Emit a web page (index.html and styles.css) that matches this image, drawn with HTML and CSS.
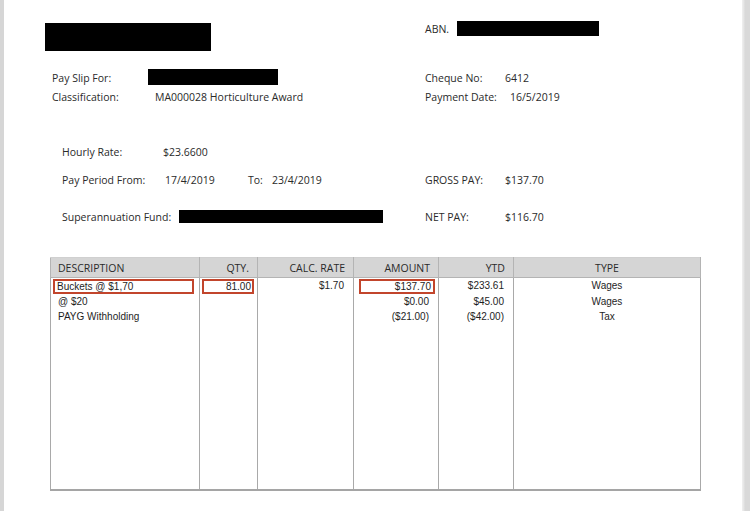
FILE: index.html
```html
<!DOCTYPE html>
<html>
<head>
<meta charset="utf-8">
<link rel="stylesheet" href="styles.css">
</head>
<body>
<div class="page">
  <div class="edge-left"></div>
  <div class="sheet">
    <div class="head">
      <div class="redact logo-r"></div>
      <div class="abn"><span class="abn-l">ABN.</span><span class="redact abn-r"></span></div>
    </div>

    <div class="row r-payslip">
      <div class="left l1">
        <span class="lab w-payslip">Pay Slip For:</span><span class="redact name-r"></span>
      </div>
      <div class="right"><span class="rlab">Cheque No:</span><span>6412</span></div>
    </div>
    <div class="row">
      <div class="left l1">
        <span class="lab w-class">Classification:</span><span>MA000028 Horticulture Award</span>
      </div>
      <div class="right"><span class="rlab">Payment Date:</span><span class="date-v">16/5/2019</span></div>
    </div>

    <div class="row r-hourly">
      <div class="left l2">
        <span class="lab w-hourly">Hourly Rate:</span><span>$23.6600</span>
      </div>
    </div>
    <div class="row r-period">
      <div class="left l2">
        <span class="lab w-period">Pay Period From:</span><span class="w-from">17/4/2019</span><span class="w-to">To:</span><span>23/4/2019</span>
      </div>
      <div class="right"><span class="rlab">GROSS PAY:</span><span>$137.70</span></div>
    </div>
    <div class="row r-super">
      <div class="left l2">
        <span class="lab w-super">Superannuation Fund:</span><span class="redact super-r"></span>
      </div>
      <div class="right"><span class="rlab">NET PAY:</span><span>$116.70</span></div>
    </div>

    <table class="items">
      <colgroup>
        <col class="c-desc"><col class="c-qty"><col class="c-rate"><col class="c-amt"><col class="c-ytd"><col class="c-type">
      </colgroup>
      <thead>
        <tr>
          <th class="t-left">DESCRIPTION</th>
          <th class="t-right">QTY.</th>
          <th class="t-right">CALC. RATE</th>
          <th class="t-right">AMOUNT</th>
          <th class="t-right">YTD</th>
          <th class="t-center">TYPE</th>
        </tr>
      </thead>
      <tbody>
        <tr class="row-a">
          <td class="t-left cell-desc"><div class="mark mark-desc">Buckets @ $1,70</div></td>
          <td class="t-right cell-qty"><div class="mark mark-qty">81.00</div></td>
          <td class="t-right">$1.70</td>
          <td class="t-right cell-amt"><div class="mark mark-amt">$137.70</div></td>
          <td class="t-right">$233.61</td>
          <td class="t-center">Wages</td>
        </tr>
        <tr class="row-b">
          <td class="t-left">@ $20</td>
          <td></td>
          <td></td>
          <td class="t-right">$0.00</td>
          <td class="t-right">$45.00</td>
          <td class="t-center">Wages</td>
        </tr>
        <tr class="row-c">
          <td class="t-left">PAYG Withholding</td>
          <td></td>
          <td></td>
          <td class="t-right">($21.00)</td>
          <td class="t-right">($42.00)</td>
          <td class="t-center">Tax</td>
        </tr>
        <tr class="row-fill">
          <td></td><td></td><td></td><td></td><td></td><td></td>
        </tr>
      </tbody>
    </table>
  </div>
  <div class="edge-right"></div>
</div>
</body>
</html>
```

FILE: styles.css
```css
html, body {
  margin: 0;
  padding: 0;
  background: #ffffff;
}

.page {
  display: flex;
  width: 750px;
  height: 511px;
  overflow: hidden;
}

.edge-left {
  width: 4px;
  background: #d6d6d6;
  flex: none;
}

.edge-right {
  width: 8px;
  flex: none;
  background: linear-gradient(to right, #f0f0f0 0, #e4e4e4 2px, #d9d9d9 3px, #d9d9d9 100%);
}

.sheet {
  flex: 1;
  background: #ffffff;
  font-family: "Open Sans", "Noto Sans", sans-serif;
  font-size: 10.5px;
  color: #2a2a2a;
}

.redact {
  display: block;
  background: #000;
  flex: none;
}

.head {
  display: flex;
  height: 47px;
  padding-top: 21px;
  padding-left: 41px;
}

.logo-r {
  width: 166px;
  height: 28px;
  margin-top: 2px;
}

.abn {
  display: flex;
  align-items: center;
  height: 15px;
  margin-left: 214px;
}

.abn-l {
  width: 32px;
}

.abn-r {
  width: 142px;
  height: 15px;
}

.row {
  display: flex;
  align-items: center;
  height: 19px;
}

.left {
  display: flex;
  align-items: center;
  flex: none;
}

.l1 {
  margin-left: 48px;
  width: 373px;
}

.l2 {
  margin-left: 58px;
  width: 363px;
}

.lab {
  flex: none;
}

.w-payslip { width: 96px; }
.w-class { width: 103px; }
.w-hourly { width: 101px; }
.w-period { width: 103px; }
.w-from { width: 83px; }
.w-to { width: 24px; }
.w-super { width: 117px; }

.name-r {
  width: 130px;
  height: 16px;
  margin-top: -2px;
}

.super-r {
  width: 204px;
  height: 13px;
  margin-top: -1px;
}

.right {
  display: flex;
  align-items: center;
}

.rlab {
  width: 80px;
}

.date-v {
  margin-left: 5px;
}

.r-hourly { margin-top: 36px; }
.r-period { margin-top: 9px; }
.r-super { margin-top: 18px; }

.items {
  margin-top: 31px;
  margin-left: 46px;
  border-collapse: collapse;
  table-layout: fixed;
  width: 650px;
}

.c-desc { width: 149px; }
.c-qty { width: 58px; }
.c-rate { width: 96px; }
.c-amt { width: 85px; }
.c-ytd { width: 75px; }
.c-type { width: 187px; }

.items th {
  height: 19px;
  padding: 0 8px 0 7px;
  background: #d5d5d5;
  border: 1px solid #b4b4b4;
  border-top-color: #d0d0d0;
  font-weight: normal;
  font-size: 10.5px;
  line-height: 14px;
  color: #2a2a2a;
}

.items td {
  border-left: 1px solid #a9a9a9;
  border-right: 1px solid #a9a9a9;
  padding: 0 9px 0 7px;
  font-family: "Liberation Sans", Arial, sans-serif;
  font-size: 10px;
  line-height: 12px;
  color: #1e1e1e;
  vertical-align: middle;
}

.items tbody tr:last-child td {
  border-bottom: 2px solid #a5a5a5;
}

.t-left { text-align: left; }
.t-right { text-align: right; }
.t-center { text-align: center; }

.items th.t-center,
.items td.t-center {
  padding-left: 0;
  padding-right: 0;
}

.row-a td { height: 16px; }
.row-b td { height: 15px; }
.row-c td { height: 16px; }
.row-fill td { height: 164px; }

.items .row-a td {
  vertical-align: top;
  padding-top: 1px;
  height: 15px;
}

.items .row-a td.t-center,
.items .row-a td:nth-child(3),
.items .row-a td:nth-child(5) {
  padding-top: 2px;
  height: 14px;
}

.mark {
  border: 2px solid #c2452c;
  height: 11px;
  line-height: 11px;
}

.items td.cell-desc {
  padding-left: 2px;
  padding-right: 5px;
}

.mark-desc {
  padding-left: 2px;
  text-align: left;
}

.items td.cell-qty {
  padding-left: 2px;
  padding-right: 3px;
}

.mark-qty {
  padding-right: 1px;
}

.items td.cell-amt {
  padding-left: 5px;
  padding-right: 3px;
}

.mark-amt {
  padding-right: 2px;
}
```
